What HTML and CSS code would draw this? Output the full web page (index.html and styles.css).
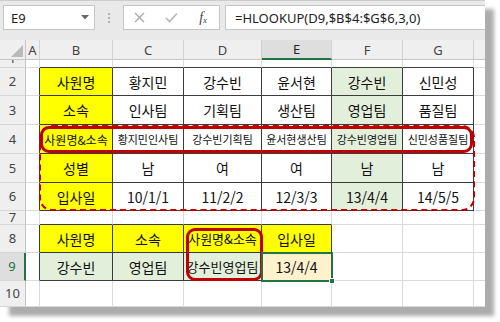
FILE: index.html
```html
<!DOCTYPE html>
<html lang="ko">
<head>
<meta charset="utf-8">
<title>HLOOKUP</title>
<link rel="stylesheet" href="styles.css">
</head>
<body>
<div class="window">
  <div class="fbar">
    <div class="namebox"><span>E9</span><svg class="dd" width="8" height="5" viewBox="0 0 8 5"><path d="M0 0H8L4 4.5Z" fill="#6a6a6a"/></svg></div>
    <div class="dots"><i></i><i></i><i></i></div>
    <div class="fxbox">
      <svg width="11" height="11" viewBox="0 0 11 11"><path d="M1 1L10 10M10 1L1 10" stroke="#a8a8a8" stroke-width="1.3" fill="none"/></svg>
      <svg width="13" height="11" viewBox="0 0 13 11"><path d="M1 6L4.6 9.6L12 1.5" stroke="#b4b4b4" stroke-width="1.5" fill="none"/></svg>
      <span class="fx">f<sub>x</sub></span>
    </div>
    <div class="formula">=HLOOKUP(D9,$B$4:$G$6,3,0)</div>
  </div>
  <div class="sheet">
    <div class="corner"><svg width="12" height="12" viewBox="0 0 12 12"><path d="M12 0V12H0Z" fill="#b9b9b9"/></svg></div>
    <div class="ch">A</div><div class="ch">B</div><div class="ch">C</div><div class="ch">D</div><div class="ch sel">E</div><div class="ch">F</div><div class="ch">G</div><div class="ch last"></div>

    <div class="rh r1"><span>1</span></div>
    <div class="c"></div><div class="c db"></div><div class="c db"></div><div class="c db"></div><div class="c db"></div><div class="c db"></div><div class="c db"></div><div class="c last"></div>

    <div class="rh">2</div>
    <div class="c dr"></div><div class="c dr db y">사원명</div><div class="c dr db">황지민</div><div class="c dr db">강수빈</div><div class="c dr db">윤서현</div><div class="c dr db g">강수빈</div><div class="c dr db">신민성</div><div class="c last"></div>

    <div class="rh">3</div>
    <div class="c dr"></div><div class="c dr db y">소속</div><div class="c dr db">인사팀</div><div class="c dr db">기획팀</div><div class="c dr db">생산팀</div><div class="c dr db g">영업팀</div><div class="c dr db">품질팀</div><div class="c last"></div>

    <div class="rh">4</div>
    <div class="c dr"></div><div class="c dr db y md">사원명&amp;소속</div><div class="c dr db sm">황지민인사팀</div><div class="c dr db sm">강수빈기획팀</div><div class="c dr db sm">윤서현생산팀</div><div class="c dr db g sm">강수빈영업팀</div><div class="c dr db sm">신민성품질팀</div><div class="c last"></div>

    <div class="rh">5</div>
    <div class="c dr"></div><div class="c dr db y">성별</div><div class="c dr db">남</div><div class="c dr db">여</div><div class="c dr db">여</div><div class="c dr db g">남</div><div class="c dr db">남</div><div class="c last"></div>

    <div class="rh">6</div>
    <div class="c dr"></div><div class="c dr db y">입사일</div><div class="c dr db">10/1/1</div><div class="c dr db">11/2/2</div><div class="c dr db">12/3/3</div><div class="c dr db g">13/4/4</div><div class="c dr db">14/5/5</div><div class="c last"></div>

    <div class="rh">7</div>
    <div class="c"></div><div class="c db"></div><div class="c db"></div><div class="c db"></div><div class="c db"></div><div class="c"></div><div class="c"></div><div class="c last"></div>

    <div class="rh">8</div>
    <div class="c dr"></div><div class="c dr db y">사원명</div><div class="c dr db y">소속</div><div class="c dr db y mdl">사원명&amp;소속</div><div class="c dr db y">입사일</div><div class="c"></div><div class="c"></div><div class="c last"></div>

    <div class="rh sel">9</div>
    <div class="c dr"></div><div class="c dr db g">강수빈</div><div class="c dr db g">영업팀</div><div class="c dr db g mdl">강수빈영업팀</div><div class="c dr db o">13/4/4</div><div class="c"></div><div class="c"></div><div class="c last"></div>

    <div class="rh">10</div>
    <div class="c"></div><div class="c"></div><div class="c"></div><div class="c"></div><div class="c"></div><div class="c"></div><div class="c"></div><div class="c last"></div>

    <div class="mark dashed"></div>
    <div class="mark row4"></div>
    <div class="mark d89"></div>
    <div class="selbox"><i class="handle"></i></div>
  </div>
</div>
</body>
</html>
```
FILE: styles.css
```css
* { box-sizing: border-box; margin: 0; padding: 0; }
html, body { background: #fff; }
body {
  width: 500px;
  height: 322px;
  overflow: hidden;
  font-family: "Noto Sans CJK KR", "Noto Sans", sans-serif;
}
.window {
  width: 485px;
  height: 307px;
  background: #fff;
  border-top: 1px solid #cdcdcd;
  box-shadow: 9px 9px 4px #acacac;
  overflow: hidden;
}
.fbar {
  height: 39px;
  background: #e9e9e9;
  display: flex;
  align-items: flex-start;
  padding-top: 4px;
}
.namebox {
  margin-left: 3px;
  width: 92px;
  height: 25px;
  background: #fff;
  border: 1px solid #c6c6c6;
  display: flex;
  align-items: center;
  padding-left: 7px;
  font: 13px "Noto Sans", sans-serif;
  color: #222;
}
.namebox .dd { margin-left: auto; margin-right: 5px; }
.dots {
  width: 28px;
  height: 25px;
  display: flex;
  flex-direction: column;
  align-items: center;
  justify-content: center;
  gap: 2px;
}
.dots i { display: block; width: 2px; height: 2px; background: #b0b0b0; }
.fxbox {
  width: 97px;
  height: 25px;
  background: #fff;
  border: 1px solid #c6c6c6;
  display: grid;
  grid-template-columns: 1fr 1fr 1fr;
  align-items: center;
  justify-items: center;
}
.fx {
  font: italic 14px "Liberation Serif", serif;
  color: #444;
}
.fx sub { font-size: 9px; vertical-align: -1px; }
.formula {
  margin-left: 5px;
  flex: 1;
  height: 25px;
  background: #fff;
  border: 1px solid #c6c6c6;
  border-right: none;
  padding-left: 9px;
  display: flex;
  align-items: center;
  font: 13px "Noto Sans", sans-serif;
  color: #222;
  white-space: nowrap;
}
.sheet {
  position: relative;
  display: grid;
  grid-template-columns: 26px 14px 73px 71px 78px 70px 71px 71px 11px;
  grid-template-rows: 20px 8px 28px 29px 29px 29px 28px 14px 28px 28px 26px;
}
.corner {
  background: #efefef;
  border-right: 1px solid #c8c8c8;
  border-bottom: 1px solid #c4c4c4;
  display: flex;
  align-items: flex-end;
  justify-content: flex-end;
  padding: 0 2px 2px 0;
}
.ch {
  background: #efefef;
  border-right: 1px solid #d2d2d2;
  border-bottom: 1px solid #c4c4c4;
  display: flex;
  align-items: center;
  justify-content: center;
  font: 13px "Noto Sans", sans-serif;
  color: #444;
}
.ch.sel {
  background: #dedede;
  border-bottom: 2px solid #217346;
  color: #262626;
}
.ch.last { border-right: none; }
.rh {
  background: #efefef;
  border-right: 1px solid #c4c4c4;
  border-bottom: 1px solid #d6d6d6;
  display: flex;
  align-items: center;
  justify-content: center;
  font: 13px/1 "Noto Sans", sans-serif;
  color: #444;
  overflow: hidden;
}
.rh.r1 { align-items: flex-start; }
.rh.r1 span { margin-top: -8px; }
.rh.sel {
  background: #dedede;
  color: #217346;
  border-right: 2px solid #217346;
}
.c {
  border-right: 1px solid #dadada;
  border-bottom: 1px solid #dadada;
  display: flex;
  align-items: center;
  justify-content: center;
  overflow: hidden;
  white-space: nowrap;
  font-size: 14px;
  color: #111;
}
.c.last { border-right: none; }
.dr { border-right-color: #3c3c3c; }
.db { border-bottom-color: #3c3c3c; }
.y { background: #ffff00; }
.g { background: #e2efda; }
.o { background: #fff2cc; }
.sm { font-size: 11px; }
.md { font-size: 12px; }
.mdl { font-size: 13px; }
.mark {
  position: absolute;
  border: 3px solid #c00000;
  border-radius: 9px;
}
.mark.dashed {
  left: 39px;
  top: 85px;
  width: 436px;
  height: 86px;
  border: 2px dashed #c00000;
  border-radius: 13px;
}
.mark.row4 {
  left: 40px;
  top: 86px;
  width: 433px;
  height: 27px;
}
.mark.d89 {
  left: 186px;
  top: 188px;
  width: 77px;
  height: 53px;
}
.selbox {
  position: absolute;
  left: 261px;
  top: 212px;
  width: 72px;
  height: 30px;
  border: 2px solid #217346;
}
.handle {
  position: absolute;
  right: -4px;
  bottom: -4px;
  width: 6px;
  height: 6px;
  background: #217346;
  border: 1px solid #fff;
}
```
